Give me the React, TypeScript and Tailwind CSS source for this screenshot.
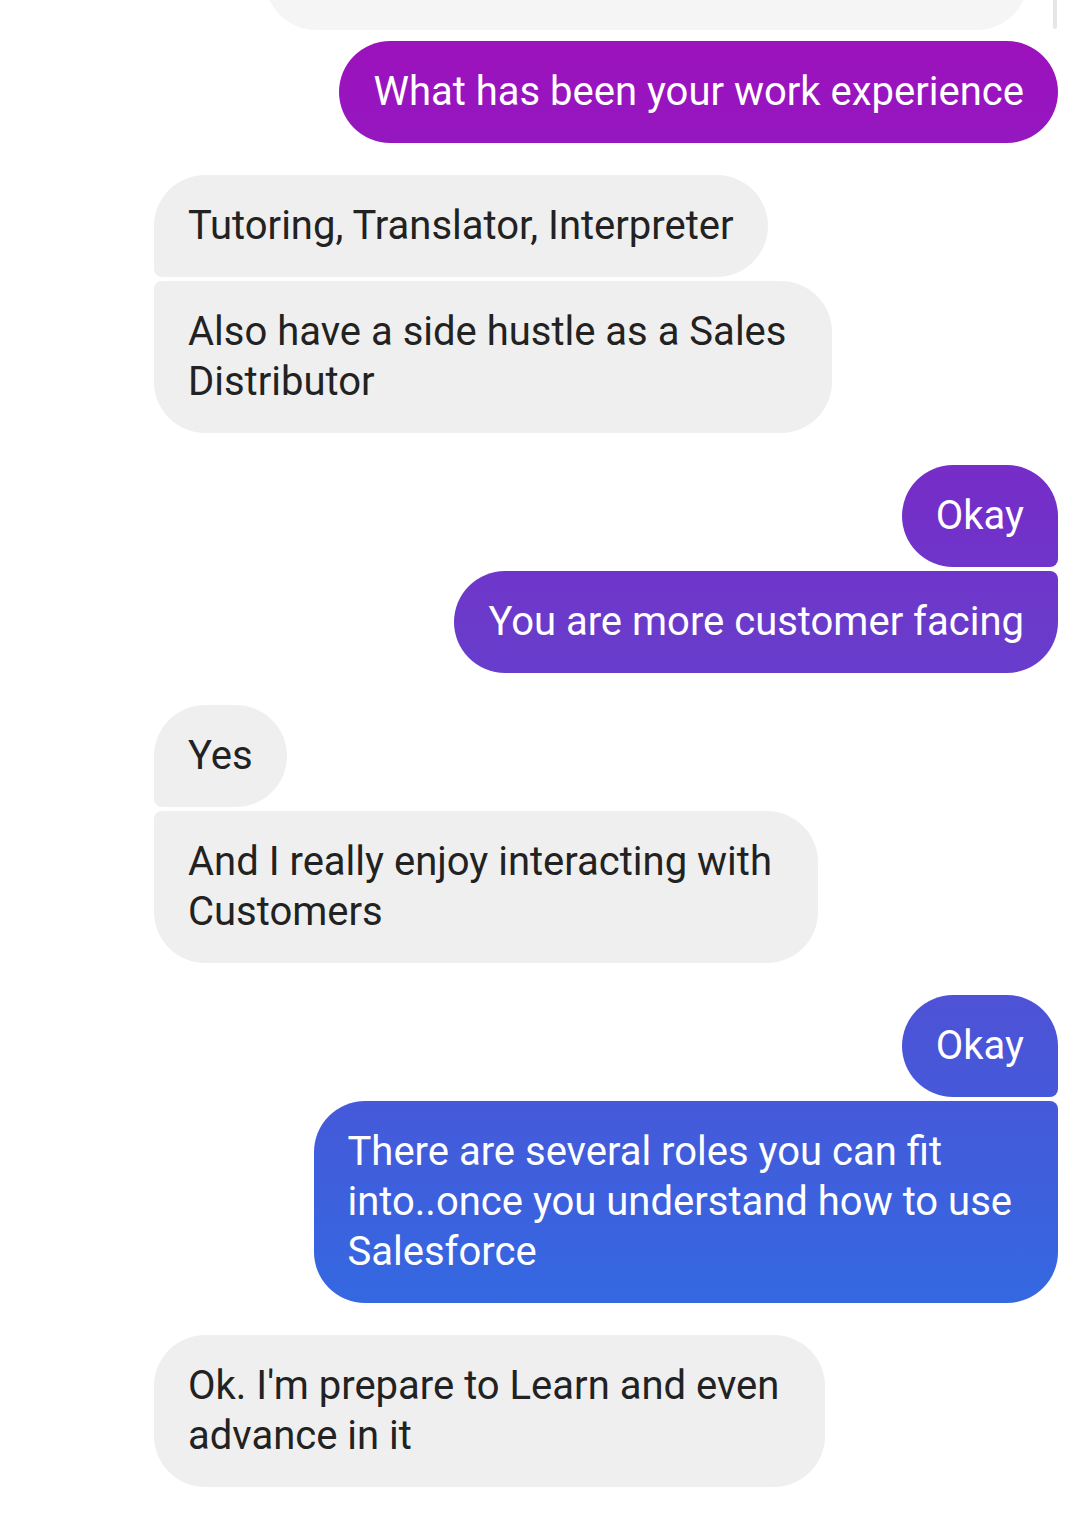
import React from "react";

type Side = "left" | "right";

const grad =
  "bg-fixed bg-[linear-gradient(180deg,#9e11bd_0px,#9914be_90px,#7330c9_515px,#6b3acb_622px,#4a55d8_1045px,#3468e1_1300px,#3169e2_1514px)]";

function Bubble({
  side,
  lines,
  corners,
}: {
  side: Side;
  lines: string[];
  corners: string;
}) {
  const color =
    side === "right" ? `${grad} text-white` : "bg-[#efefef] text-[#222222]";
  const pad = lines.length > 1 ? "pl-[34px] pr-[46px]" : "px-[34px]";
  return (
    <div className={`flex ${side === "right" ? "justify-end" : "justify-start"}`}>
      <div
        className={`${color} ${corners} ${pad} py-[26px] text-[40px] leading-[50px] whitespace-nowrap`}
      >
        {lines.map((l, i) => (
          <div key={i}>{l}</div>
        ))}
      </div>
    </div>
  );
}

export default function App() {
  return (
    <div
      className="relative w-[1080px] h-[1514px] overflow-hidden bg-white"
      style={{ fontFamily: "Roboto, 'Noto Sans', sans-serif" }}
    >
      <div className="absolute right-[23px] top-0 w-[4px] h-[29px] rounded-b-full bg-[#e6e6e6]" />
      <div className="pl-[154px] pr-[22px]">
        <div className="flex justify-end pr-[30px]">
          <div className="w-[763px] h-[100px] -mt-[70px] rounded-b-[51px] bg-[#f5f5f5]" />
        </div>
        <div className="flex flex-col gap-[32px] mt-[11px]">
          <Bubble side="right" lines={["What has been your work experience"]} corners="rounded-[51px]" />
          <div className="flex flex-col gap-[4px]">
            <Bubble
              side="left"
              lines={["Tutoring, Translator, Interpreter"]}
              corners="rounded-[51px] rounded-bl-[8px]"
            />
            <Bubble
              side="left"
              lines={["Also have a side hustle as a Sales", "Distributor"]}
              corners="rounded-[51px] rounded-tl-[8px]"
            />
          </div>
          <div className="flex flex-col gap-[4px]">
            <Bubble side="right" lines={["Okay"]} corners="rounded-[51px] rounded-br-[8px]" />
            <Bubble
              side="right"
              lines={["You are more customer facing"]}
              corners="rounded-[51px] rounded-tr-[8px]"
            />
          </div>
          <div className="flex flex-col gap-[4px]">
            <Bubble side="left" lines={["Yes"]} corners="rounded-[51px] rounded-bl-[8px]" />
            <Bubble
              side="left"
              lines={["And I really enjoy interacting with", "Customers"]}
              corners="rounded-[51px] rounded-tl-[8px]"
            />
          </div>
          <div className="flex flex-col gap-[4px]">
            <Bubble side="right" lines={["Okay"]} corners="rounded-[51px] rounded-br-[8px]" />
            <Bubble
              side="right"
              lines={[
                "There are several roles you can fit",
                "into..once you understand how to use",
                "Salesforce",
              ]}
              corners="rounded-[51px] rounded-tr-[8px]"
            />
          </div>
          <Bubble
            side="left"
            lines={["Ok. I'm prepare to Learn and even", "advance in it"]}
            corners="rounded-[51px]"
          />
        </div>
      </div>
    </div>
  );
}
